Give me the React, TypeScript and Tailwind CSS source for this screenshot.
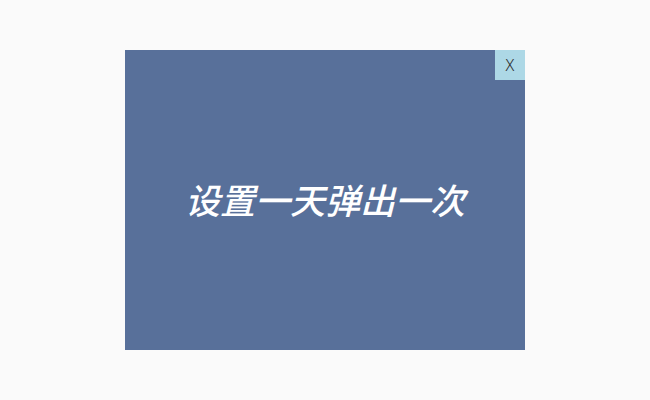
export default function App() {
  return (
    <div className="w-[650px] h-[400px] bg-[#fafafa] flex items-center justify-center" style={{ fontFamily: '"Noto Sans", "Noto Sans CJK SC", sans-serif' }}>
      {/* Popup */}
      <div className="relative w-[400px] h-[300px] bg-[#58709a] flex items-center justify-center">
        <h1 className="text-[35px] font-medium italic text-white leading-none">设置一天弹出一次</h1>
        <button className="absolute top-0 right-0 w-[30px] h-[30px] bg-[#add8e6] text-[#2a2a2a] text-[16px] font-light flex items-center justify-center">
          X
        </button>
      </div>
    </div>
  );
}
